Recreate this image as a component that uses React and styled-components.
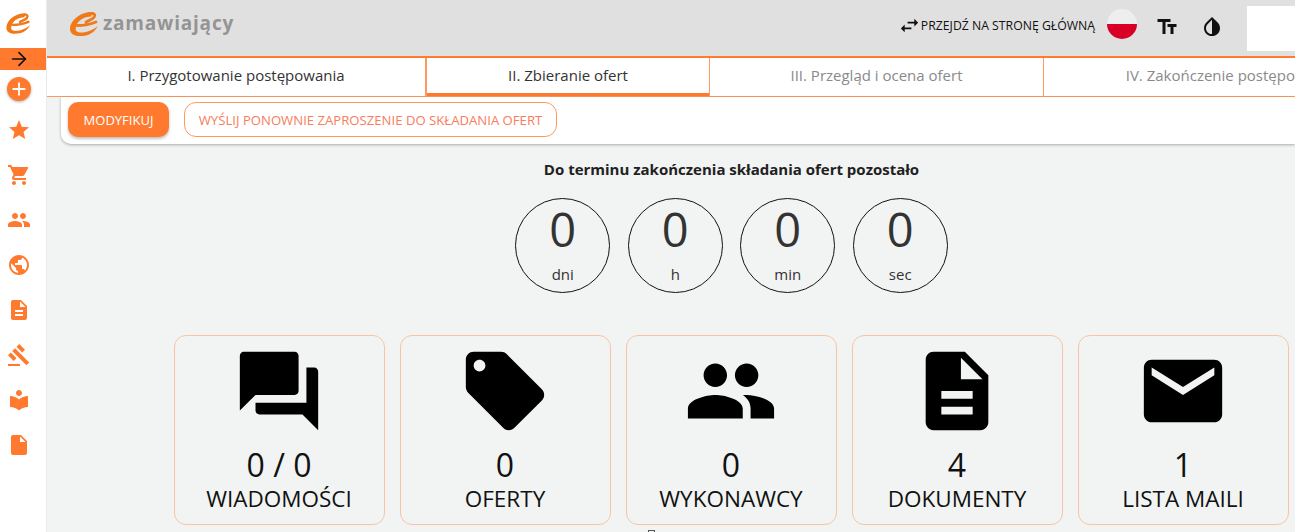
import React from 'react';
import styled, { createGlobalStyle } from 'styled-components';
import { ArrowRight } from 'lucide-react';
import {
  MdAdd, MdStar, MdShoppingCart, MdPeople, MdPublic, MdDescription,
  MdGavel, MdLocalLibrary, MdInsertDriveFile, MdForum, MdLocalOffer, MdEmail,
  MdSwapHoriz, MdTextFields, MdInvertColors,
} from 'react-icons/md';

const ORANGE = '#ff7a2f';

const GlobalStyle = createGlobalStyle`
  html, body {
    margin: 0;
    height: 100%;
    overflow: hidden;
    background: #f2f4f3;
    font-family: "Open Sans", "Liberation Sans", sans-serif;
    color: #212529;
  }
`;

const Page = styled.div`
  display: flex;
  width: 1295px;
  height: 532px;
  overflow: hidden;
`;

const Sidebar = styled.aside`
  flex: 0 0 46px;
  background: #fff;
  display: flex;
  flex-direction: column;
  border-right: 1px solid #e9ecea;
`;

const SideLogo = styled.div`
  height: 48px;
  box-sizing: border-box;
  padding: 10px 0 0 3px;
`;

const ToggleBar = styled.div`
  height: 22px;
  background: ${ORANGE};
  color: #111;
  padding-left: 8px;
  display: flex;
  align-items: center;
`;

const AddButton = styled.div`
  width: 24px;
  height: 24px;
  margin: 7px 0 0 7px;
  border-radius: 50%;
  background: ${ORANGE};
  color: #fff;
  font-size: 22px;
  display: flex;
  align-items: center;
  justify-content: center;
  box-shadow: 0 1px 3px rgba(0, 0, 0, 0.3);
`;

const SideNav = styled.nav`
  display: flex;
  flex-direction: column;
  margin-top: 17px;
  gap: 21px;
`;

const SideItem = styled.div`
  width: 37px;
  height: 24px;
  color: ${ORANGE};
  font-size: 24px;
  display: flex;
  justify-content: center;
`;

const Main = styled.main`
  flex: 1;
  min-width: 0;
  display: flex;
  flex-direction: column;
`;

const Header = styled.header`
  flex: none;
  height: 56px;
  background: #e0e0e0;
  border-bottom: 2px solid ${ORANGE};
  display: flex;
  align-items: center;
  padding-left: 19px;
`;

const Brand = styled.div`
  display: flex;
  align-items: center;
  margin-bottom: 10px;
`;

const BrandName = styled.span`
  font-weight: 700;
  font-size: 19px;
  letter-spacing: 0.8px;
  color: #949494;
  margin-left: 1px;
`;

const HeaderRight = styled.div`
  margin-left: auto;
  display: flex;
  align-items: center;
`;

const HomeLink = styled.div`
  display: flex;
  align-items: center;
  font-size: 12.25px;
  color: #111;
  margin: 0 12px 6px 0;
  svg { font-size: 23px; }
`;

const Flag = styled.div`
  width: 30px;
  height: 30px;
  margin-bottom: 8px;
  border-radius: 50%;
  background: linear-gradient(#eeeeee 50%, #d80027 50%);
`;

const ToolIcon = styled.div`
  color: #111;
  font-size: ${(p) => p.$size}px;
  margin: 0 0 2px ${(p) => p.$gap}px;
  display: flex;
`;

const WhiteBox = styled.div`
  width: 48px;
  height: 45px;
  background: #fff;
  margin-left: 23px;
`;

const Tabs = styled.div`
  display: flex;
  height: 38px;
  background: #fff;
  border-bottom: 1px solid #ff9a5c;
  flex: none;
`;

const Tab = styled.div`
  flex: 0 0 ${(p) => p.$width}px;
  box-sizing: border-box;
  padding-bottom: 5px;
  display: flex;
  align-items: center;
  justify-content: center;
  font-size: 15px;
  white-space: nowrap;
  color: ${(p) => (p.$muted ? '#8a8a8a' : '#333')};
  border-right: ${(p) => (p.$last ? 'none' : '1px solid #ff9a5c')};
  border-left: ${(p) => (p.$active ? '1px solid #ff9a5c' : 'none')};
  box-shadow: ${(p) => (p.$active ? `inset 0 -3px 0 ${ORANGE}` : 'none')};
`;

const Toolbar = styled.div`
  margin-left: 14px;
  height: 47px;
  box-sizing: border-box;
  padding: 5px 7px;
  background: #fff;
  border-bottom-left-radius: 10px;
  box-shadow: 0 1px 3px rgba(0, 0, 0, 0.3);
  display: flex;
  gap: 15px;
  align-items: flex-start;
  flex: none;
`;

const PrimaryButton = styled.div`
  width: 101px;
  height: 35px;
  border-radius: 10px;
  background: ${ORANGE};
  color: #fff;
  font-size: 13px;
  display: flex;
  align-items: center;
  justify-content: center;
  box-shadow: 0 2px 3px rgba(0, 0, 0, 0.25);
`;

const OutlineButton = styled.div`
  width: 373px;
  height: 35px;
  box-sizing: border-box;
  border: 1px solid #ff9a5c;
  border-radius: 12px;
  background: #fff;
  color: #f97c5c;
  font-size: 13.15px;
  display: flex;
  align-items: center;
  justify-content: center;
`;

const Content = styled.section`
  flex: none;
  padding: 0 6px 0 127px;
  display: flex;
  flex-direction: column;
  align-items: center;
`;

const CountTitle = styled.h2`
  margin: 16px 0 0;
  font-size: 15px;
  line-height: 19px;
  font-weight: 700;
  color: #212121;
`;

const Timer = styled.div`
  display: flex;
  gap: 17.5px;
  margin-top: 19px;
`;

const Circle = styled.div`
  width: 95px;
  height: 95px;
  box-sizing: border-box;
  border: 1px solid #111;
  border-radius: 50%;
  display: flex;
  flex-direction: column;
  align-items: center;
`;

const CircleValue = styled.div`
  font-size: 47px;
  line-height: 60px;
  color: #333;
`;

const CircleUnit = styled.div`
  font-size: 15px;
  line-height: 19px;
  margin-top: 6px;
  color: #333;
`;

const Cards = styled.div`
  display: grid;
  grid-template-columns: repeat(5, 211px);
  gap: 15px;
  margin-top: 42px;
`;

const Card = styled.div`
  height: 190px;
  box-sizing: border-box;
  border: 1px solid #f8c4a4;
  border-radius: 12px;
  display: flex;
  flex-direction: column;
  align-items: center;
  padding: 8px 1px 0 0;
  color: #000;
  svg { display: block; }
`;

const CardValue = styled.div`
  font-size: 32px;
  line-height: 43px;
  margin-top: 5px;
  color: #111;
`;

const CardLabel = styled.div`
  font-size: 22.5px;
  line-height: 28px;
  margin-top: -1px;
  color: #111;
`;

// small box peeking in at the bottom edge of the page
const PeekBox = styled.div`
  align-self: flex-start;
  width: 5px;
  height: 5px;
  margin: 5px 0 0 474px;
  border: 1px solid #555;
`;

// swoosh "e" used in both logos
const LogoMark = ({ scale }) => (
  <svg width={36 * scale} height={30 * scale} viewBox="0 0 36 30" fill="none">
    <path
      d="M27 4C18 3 5 10 4 20 3.500 28 12 29 20 27.500 25 26.500 29 23 32 18 27 22 21 24.500 15 24.500 10 24.500 9 22 10 19 11 13 18 8.500 25 8.500L27 4Z"
      fill="#f07a1a"
    />
    <path
      d="M11 17.500C16 17.500 23 17 30 14M26 5.500C30 5.500 29.500 9 26 11 24 12 22 13 20 14"
      stroke="#f07a1a"
      strokeWidth="2.8"
      strokeLinecap="round"
    />
  </svg>
);

const sideIcons = [MdStar, MdShoppingCart, MdPeople, MdPublic, MdDescription, MdGavel, MdLocalLibrary, MdInsertDriveFile];

const cards = [
  { icon: MdForum, value: '0 / 0', label: 'WIADOMOŚCI' },
  { icon: MdLocalOffer, value: '0', label: 'OFERTY' },
  { icon: MdPeople, value: '0', label: 'WYKONAWCY' },
  { icon: MdDescription, value: '4', label: 'DOKUMENTY' },
  { icon: MdEmail, value: '1', label: 'LISTA MAILI' },
];

const App = () => {
  return (
    <Page>
      <GlobalStyle />
      <Sidebar>
        <SideLogo><LogoMark scale={0.85} /></SideLogo>
        <ToggleBar><ArrowRight size={22} strokeWidth={1.8} /></ToggleBar>
        <AddButton><MdAdd /></AddButton>
        <SideNav>
          {sideIcons.map((Icon, i) => (
            <SideItem key={i}><Icon /></SideItem>
          ))}
        </SideNav>
      </Sidebar>
      <Main>
        <Header>
          <Brand>
            <LogoMark scale={1} />
            <BrandName>zamawiający</BrandName>
          </Brand>
          <HeaderRight>
            <HomeLink><MdSwapHoriz />PRZEJDŹ NA STRONĘ GŁÓWNĄ</HomeLink>
            <Flag />
            <ToolIcon $size={24} $gap={18}><MdTextFields /></ToolIcon>
            <ToolIcon $size={24} $gap={21}><MdInvertColors /></ToolIcon>
            <WhiteBox />
          </HeaderRight>
        </Header>
        <Tabs>
          <Tab $width={379}>I. Przygotowanie postępowania</Tab>
          <Tab $width={284} $active>II. Zbieranie ofert</Tab>
          <Tab $width={334} $muted>III. Przegląd i ocena ofert</Tab>
          <Tab $width={374} $muted $last>IV. Zakończenie postępowania</Tab>
        </Tabs>
        <Toolbar>
          <PrimaryButton>MODYFIKUJ</PrimaryButton>
          <OutlineButton>WYŚLIJ PONOWNIE ZAPROSZENIE DO SKŁADANIA OFERT</OutlineButton>
        </Toolbar>
        <Content>
          <CountTitle>Do terminu zakończenia składania ofert pozostało</CountTitle>
          <Timer>
            {['dni', 'h', 'min', 'sec'].map((unit) => (
              <Circle key={unit}>
                <CircleValue>0</CircleValue>
                <CircleUnit>{unit}</CircleUnit>
              </Circle>
            ))}
          </Timer>
          <Cards>
            {cards.map(({ icon: Icon, value, label }) => (
              <Card key={label}>
                <Icon size={94} />
                <CardValue>{value}</CardValue>
                <CardLabel>{label}</CardLabel>
              </Card>
            ))}
          </Cards>
          <PeekBox />
        </Content>
      </Main>
    </Page>
  );
};

export default App;
